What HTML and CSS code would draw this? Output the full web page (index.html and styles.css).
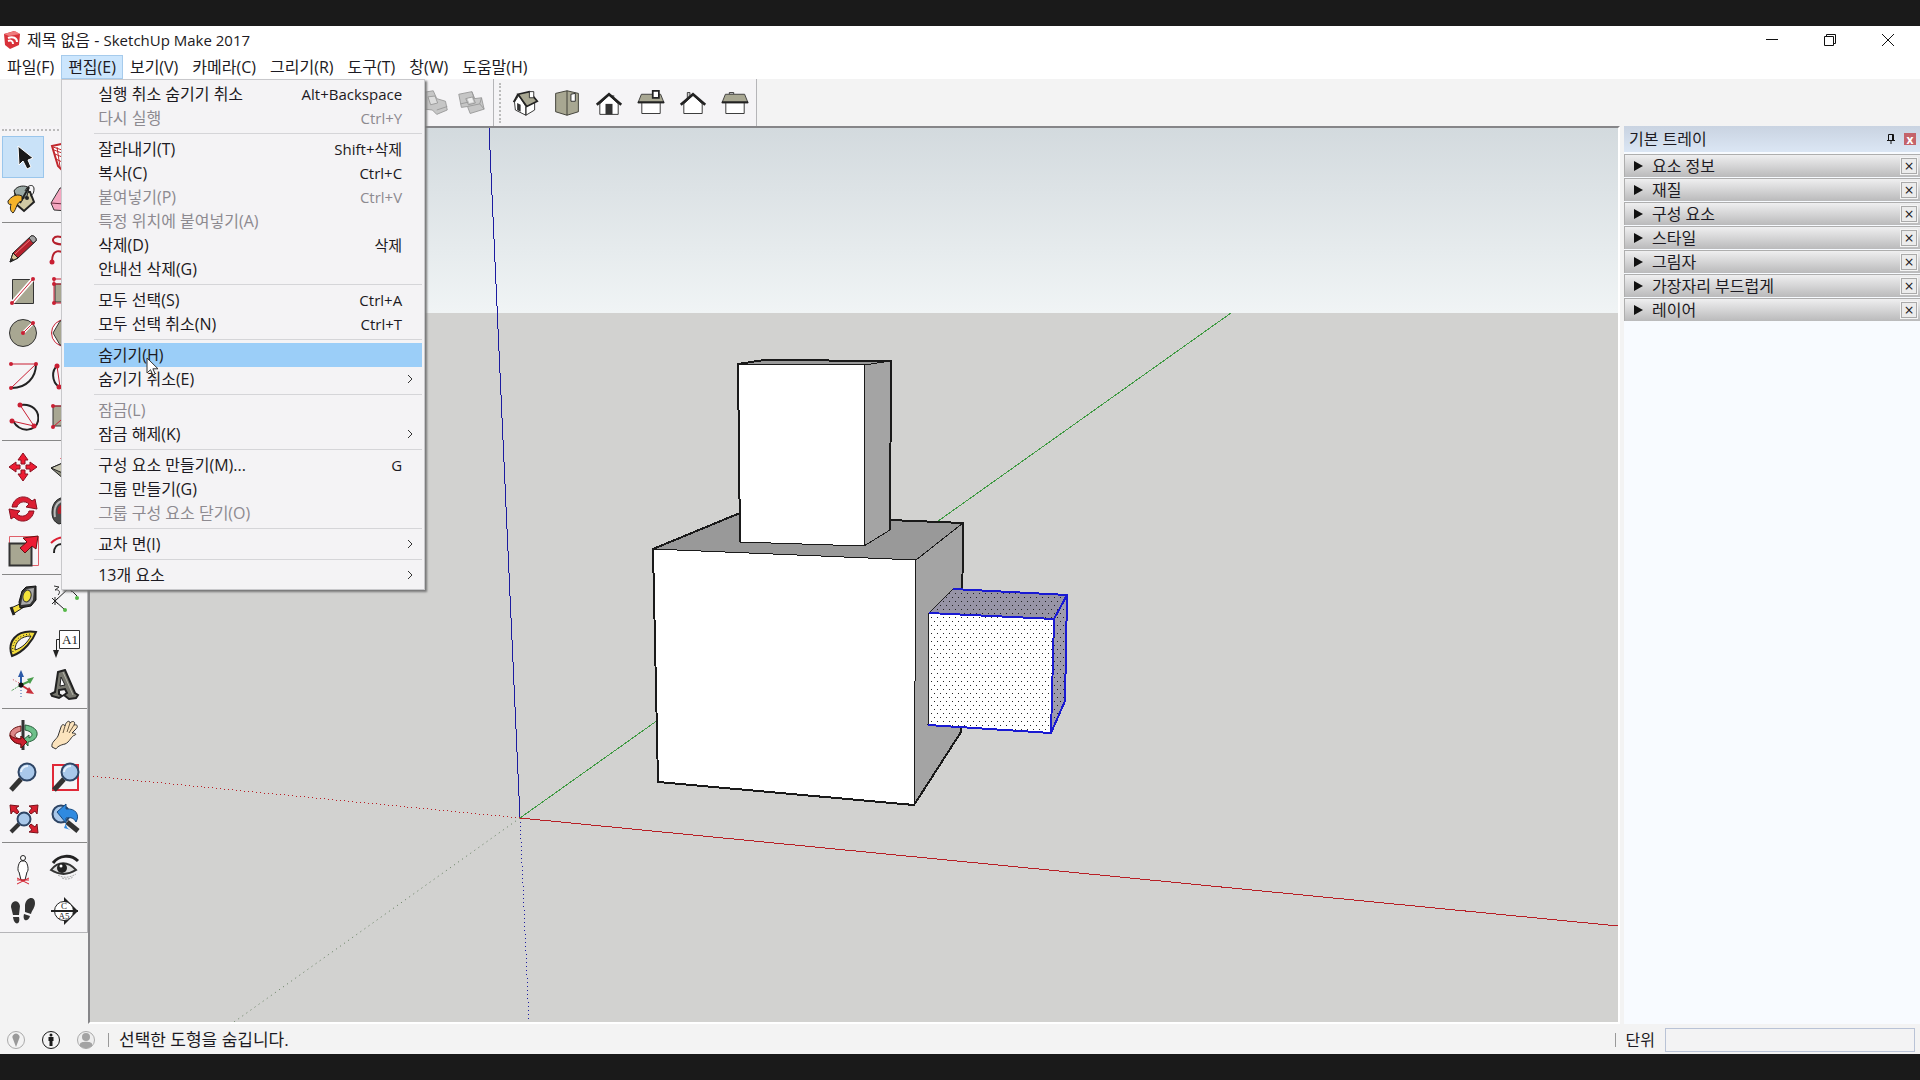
FILE: index.html
```html
<!DOCTYPE html>
<html lang="ko">

<head>
    <meta charset="UTF-8">
    <meta name="viewport" content="width=device-width, initial-scale=1.0">
    <title>제목 없음 - SketchUp Make 2017</title>
    <link rel="stylesheet" href="styles.css">
</head>

<body>
    <div class="window">
        <header class="titlebar">
            <svg class="logo" width="18" height="20" viewBox="0 0 18 20">
                <path d="M1 4L11 1l6 3-1 11-9 4-5-4z" fill="#d8323a" />
                <path d="M1 4l5 2 11-2-5-3z" fill="#ef7b7d" />
                <path d="M5 8c5-2 9 0 9 4M5 11c3-1 5 0 5 3" fill="none" stroke="#fff" stroke-width="2" />
            </svg>
            <h1 class="title">제목 없음 - <span class="latin">SketchUp Make 2017</span></h1>
            <div class="controls">
                <button aria-label="최소화"><svg width="12" height="12"><path d="M0 5.500h12" /></svg></button>
                <button aria-label="이전 크기로"><svg width="12" height="12"><path d="M.5 2.500h9v9h-9zM2.500 2.500v-2h9v9h-2" /></svg></button>
                <button aria-label="닫기"><svg width="12" height="12"><path d="M0 0l12 12M12 0L0 12" /></svg></button>
            </div>
        </header>

        <nav class="menubar">
            <div class="menu"><button class="menu-title">파일(F)</button></div>
            <div class="menu open">
                <button class="menu-title">편집(E)</button>
                <div class="dropdown">
                    <button class="item">실행 취소 숨기기 취소<kbd>Alt+Backspace</kbd></button>
                    <button class="item" disabled>다시 실행<kbd>Ctrl+Y</kbd></button>
                    <hr>
                    <button class="item">잘라내기(T)<kbd>Shift+삭제</kbd></button>
                    <button class="item">복사(C)<kbd>Ctrl+C</kbd></button>
                    <button class="item" disabled>붙여넣기(P)<kbd>Ctrl+V</kbd></button>
                    <button class="item" disabled>특정 위치에 붙여넣기(A)</button>
                    <button class="item">삭제(D)<kbd>삭제</kbd></button>
                    <button class="item">안내선 삭제(G)</button>
                    <hr>
                    <button class="item">모두 선택(S)<kbd>Ctrl+A</kbd></button>
                    <button class="item">모두 선택 취소(N)<kbd>Ctrl+T</kbd></button>
                    <hr>
                    <button class="item active">숨기기(H)
                        <svg class="pointer" width="14" height="20" viewBox="0 0 14 20"><path d="M1 1v15l3.500-3.300 2.300 5.300 2.400-1-2.300-5.200H12z" fill="#fff" stroke="#333" /></svg>
                    </button>
                    <button class="item">숨기기 취소(E)<svg class="more" width="6" height="10"><path d="M1 1l4 4-4 4" /></svg></button>
                    <hr>
                    <button class="item" disabled>잠금(L)</button>
                    <button class="item">잠금 해제(K)<svg class="more" width="6" height="10"><path d="M1 1l4 4-4 4" /></svg></button>
                    <hr>
                    <button class="item">구성 요소 만들기(M)...<kbd>G</kbd></button>
                    <button class="item">그룹 만들기(G)</button>
                    <button class="item" disabled>그룹 구성 요소 닫기(O)</button>
                    <hr>
                    <button class="item">교차 면(I)<svg class="more" width="6" height="10"><path d="M1 1l4 4-4 4" /></svg></button>
                    <hr>
                    <button class="item">13개 요소<svg class="more" width="6" height="10"><path d="M1 1l4 4-4 4" /></svg></button>
                </div>
            </div>
            <div class="menu"><button class="menu-title">보기(V)</button></div>
            <div class="menu"><button class="menu-title">카메라(C)</button></div>
            <div class="menu"><button class="menu-title">그리기(R)</button></div>
            <div class="menu"><button class="menu-title">도구(T)</button></div>
            <div class="menu"><button class="menu-title">창(W)</button></div>
            <div class="menu"><button class="menu-title">도움말(H)</button></div>
        </nav>

        <div class="toolbars">
            <!-- solid tools -->
            <div class="toolbar solids">
                <button aria-label="빼기"><svg viewBox="0 0 32 32"><path d="M2 4l12-2 4 9 10 3 2 10-12 5-5-5-9-1z" fill="#c6c6c6" stroke="#979797" /><path d="M8 9l8-1 3 8-8 2zM18 24l12-4" fill="#ddd" stroke="#979797" /></svg></button>
                <button aria-label="분할"><svg viewBox="0 0 32 32"><path d="M2 6l15-3 3 8 8-1 3 13-16 5-3-8-7 1z" fill="#c6c6c6" stroke="#979797" /><path d="M10 11l8-2 3 7-8 2zM12 20l14-3M20 11l-3-8M4 17l9-2M28 10l-2 7 5 6" fill="none" stroke="#979797" /><path d="M12 11l5-1 2 5-5 1z" fill="#eee" /></svg></button>
            </div>
            <!-- standard views -->
            <div class="toolbar views">
                <button aria-label="등각"><svg viewBox="0 0 32 32"><path d="M4 15l5-8 8 13v10L5 24zM17 20l10-5v9l-10 6z" fill="#fff" stroke="#222" /><path d="M8 6l13-3 9 11-12 6z" fill="#a8a792" stroke="#222" stroke-width="2" /><path d="M8 6L3 15" stroke="#222" stroke-width="2" /><path d="M7 16l4 2v8l-4-2z" fill="#333" /><path d="M21 3h5v7h-5z" fill="#fff" stroke="#222" /></svg></button>
                <button aria-label="상단"><svg viewBox="0 0 32 32"><path d="M3 5l13-3 13 3v21l-13 4-13-4z" fill="#a8a792" stroke="#33332c" /><path d="M16 2v28" stroke="#33332c" /><path d="M20.500 6l5-1v9h-5z" fill="#fff" stroke="#222" /></svg></button>
                <button aria-label="전면"><svg viewBox="0 0 32 32"><path d="M19 7h3v4h-3z" fill="#777" /><path d="M5.500 17v12h21V17L16 7z" fill="#fff" stroke="#222" /><path d="M2 18L16 6l14 12" fill="none" stroke="#222" stroke-width="3" /><path d="M12 17h8v12h-8z" fill="#333" /></svg></button>
                <button aria-label="오른쪽"><svg viewBox="0 0 32 32"><path d="M5.500 15h21v13h-21z" fill="#fff" stroke="#222" /><path d="M5 6h22l4 10H1z" fill="#a8a792" stroke="#333" /><path d="M1 15h30" stroke="#222" stroke-width="2" /><path d="M18 2h7v8h-7z" fill="#fff" stroke="#222" stroke-width="2" /></svg></button>
                <button aria-label="뒷면"><svg viewBox="0 0 32 32"><path d="M9.500 12V4h3v6" fill="#ccc" stroke="#333" /><path d="M5.500 17v11h21V17L16 7z" fill="#fff" stroke="#222" /><path d="M2 18L16 6l14 12" fill="none" stroke="#222" stroke-width="3" /></svg></button>
                <button aria-label="왼쪽"><svg viewBox="0 0 32 32"><path d="M5.500 15h21v13h-21z" fill="#fff" stroke="#222" /><path d="M9.500 6V4h5v2" fill="#ccc" stroke="#333" /><path d="M5 6h22l4 10H1z" fill="#a8a792" stroke="#333" /><path d="M1 15h30" stroke="#222" stroke-width="2" /></svg></button>
            </div>
        </div>

        <main class="workspace">
            <aside class="palette">
                <div class="group">
                    <button class="selected" aria-label="선택"><svg viewBox="0 0 32 32"><path d="M11 5l1 19 4-4 4 8 4-2-3-7 5-2z" fill="#1a1a1a" stroke="#fff" /></svg></button>
                    <button aria-label="구성 요소 만들기"><svg viewBox="0 0 32 32"><path d="M3 5l14-3 12 4-3 18-12 6-5-5z" fill="#fff" stroke="#c1272d" stroke-width="2" /><path d="M4 6l9 3v19M13 9l15-3M5 9l8 3M6 13l7 3M8 6l3 20M7 18l6 3" fill="none" stroke="#c1272d" /></svg></button>
                    <button aria-label="페인트통"><svg viewBox="0 0 32 32"><path d="M8 8l15 1 4 10-10 9-8-7z" fill="#cfc8a4" stroke="#222" stroke-width="2" /><path d="M7 8c3-6 12-6 15-3l-2 8-8 6z" fill="#9aa9a5" stroke="#222" /><path d="M13 20L22 4" stroke="#222" stroke-width="2" /><path d="M18 8c3-7 9-7 9-2s-2 6-4 7" fill="none" stroke="#222" /><circle cx="20" cy="15" r="2" fill="#222" /><path d="M15 13c-6-3-11 1-14 5 0 3 1 4 3 3-1 4-1 7 2 9 4-4 3-11 9-12z" fill="#f5b32a" stroke="#222" /></svg></button>
                    <button aria-label="지우개"><svg viewBox="0 0 32 32"><path d="M2 20L11 5l16-1 4 9-12 15-14-1z" fill="#f4a6c0" stroke="#333" /><path d="M2 20l13 1L27 4M15 21l4 7" fill="none" stroke="#6b2b3f" /></svg></button>
                </div>
                <div class="group">
                    <button aria-label="선"><svg viewBox="0 0 32 32"><path d="M3 29l3-9L24 3c3-1 6 2 5 5L11 25z" fill="#b5202c" stroke="#222" /><path d="M8 21L25 5" stroke="#ef7b7d" /><path d="M3 29l3-9 5 5z" fill="#d8c79a" stroke="#222" /><path d="M3 29l2-4 2 2z" fill="#222" /><path d="M24 3c3-1 6 2 5 5l-3 2-4-5z" fill="#a3a3a3" stroke="#333" /></svg></button>
                    <button aria-label="자유 곡선"><svg viewBox="0 0 32 32"><path d="M28 4H12C4 2 2 8 6 10s14 2 18 0M3 29c0-14 8-12 16-7" fill="none" stroke="#b5202c" stroke-width="2" /><circle cx="3" cy="29" r="2.500" fill="#c91f33" /></svg></button>
                    <button aria-label="직사각형"><svg viewBox="0 0 32 32"><path d="M5.500 4.500h21v24h-21z" fill="#a8a792" stroke="#333" /><path d="M5 28L26 4" stroke="#fff" stroke-width="4" /><path d="M5 28L26 4" stroke="#c91f33" /><circle cx="5" cy="28" r="2" fill="#c91f33" /><circle cx="26" cy="4" r="2" fill="#c91f33" /></svg></button>
                    <button aria-label="회전된 직사각형"><svg viewBox="0 0 32 32"><path d="M6 9h22v18H6z" fill="#a8a792" stroke="#333" /><path d="M5 4v24h24M5 9h20M5 4h24" fill="none" stroke="#c91f33" /><circle cx="5" cy="4" r="2" fill="#c91f33" /><circle cx="5" cy="9" r="2" fill="#c91f33" /><circle cx="5" cy="28" r="2" fill="#c91f33" /></svg></button>
                    <button aria-label="원"><svg viewBox="0 0 32 32"><circle cx="16" cy="16" r="13.500" fill="#a8a792" stroke="#333" /><path d="M16 16l9-9" stroke="#fff" stroke-width="3" /><path d="M16 16l9-9" stroke="#c91f33" /><circle cx="16" cy="16" r="2" fill="#c91f33" /><circle cx="26" cy="6" r="2" fill="#c91f33" /></svg></button>
                    <button aria-label="다각형"><svg viewBox="0 0 32 32"><circle cx="16" cy="16" r="13.500" fill="#fff" stroke="#c91f33" /><path d="M4 16L11 4h12l6 12-6 12H11z" fill="#a8a792" stroke="#333" /></svg></button>
                    <button aria-label="호"><svg viewBox="0 0 32 32"><path d="M29 5c0 14-10 24-24 24" fill="none" stroke="#222" stroke-width="2" /><path d="M4 5h25L4 29" fill="none" stroke="#c91f33" /><circle cx="4" cy="5" r="2" fill="#c91f33" /><circle cx="29" cy="5" r="2" fill="#c91f33" /><circle cx="4" cy="29" r="2" fill="#c91f33" /></svg></button>
                    <button aria-label="2점 호"><svg viewBox="0 0 32 32"><path d="M8 7c-5 4-6 15 2 21" fill="none" stroke="#222" stroke-width="2" /><path d="M8 7l3 21L26 6" fill="none" stroke="#c91f33" /><circle cx="8" cy="7" r="2.500" fill="#c91f33" /><circle cx="10" cy="28" r="2.500" fill="#c91f33" /></svg></button>
                    <button aria-label="3점 호"><svg viewBox="0 0 32 32"><path d="M13 4c12-2 20 6 18 16S14 33 6 20" fill="none" stroke="#222" stroke-width="2" /><path d="M13 4l14 21L5 20" fill="none" stroke="#c91f33" /><circle cx="13" cy="4" r="2.500" fill="#c91f33" /><circle cx="27" cy="25" r="2.500" fill="#c91f33" /><circle cx="5" cy="20" r="2.500" fill="#c91f33" /></svg></button>
                    <button aria-label="파이"><svg viewBox="0 0 32 32"><path d="M4 5h22v20H4z" fill="#a8a792" stroke="#333" /><path d="M4 5h24M4 26L28 5" fill="none" stroke="#c91f33" /><circle cx="4" cy="5" r="2" fill="#c91f33" /><circle cx="4" cy="26" r="2" fill="#c91f33" /></svg></button>
                </div>
                <div class="group">
                    <button aria-label="이동"><svg viewBox="0 0 32 32"><path d="M16 2l5 7h-3v4h-4V9h-3zM16 30l5-7h-3v-4h-4v4h-3zM2 16l7-5v3h4v4H9v3zM30 16l-7-5v3h-4v4h4v3z" fill="#ed1c33" stroke="#8a1020" /></svg></button>
                    <button aria-label="밀기/끌기"><svg viewBox="0 0 32 32"><path d="M2 17l14-6 14 5v5l-14 8z" fill="#8f8f7d" stroke="#222" /><path d="M2 17l14-6 14 5-14 7z" fill="#c6c4b0" stroke="#222" /><path d="M16 2l5 6h-3v8h-4V8h-3z" fill="#ed1c33" /></svg></button>
                    <button aria-label="회전"><svg viewBox="0 0 32 32"><path d="M5 14C7 3 19 1 25 8l3-2 2 10-11-2 3-3c-4-4-11-2-12 3zM27 18c-2 11-14 13-20 6l-3 2L2 16l11 2-3 3c4 4 11 2 12-3z" fill="#dc1f33" stroke="#8a1020" /></svg></button>
                    <button aria-label="따라가기"><svg viewBox="0 0 32 32"><path d="M3 19C3 8 11 2 22 5l7 5-6 17-13 4C5 29 3 25 3 19z" fill="#4d4d4d" stroke="#222" /><path d="M6 24C4 12 10 6 19 8" fill="none" stroke="#bbb" stroke-width="2" /><path d="M9 21c-2-6 2-11 11-10l5 8z" fill="#b5202c" /></svg></button>
                    <button aria-label="배율"><svg viewBox="0 0 32 32"><path d="M2.500 1.500h29v29h-29z" fill="none" stroke="#e0606a" /><path d="M2.500 8.500h22v22h-22z" fill="#a8a792" stroke="#333" stroke-width="2" /><path d="M31 1l-2 13-4-3-7 7-5-5 7-6-4-4z" fill="#ed1c33" stroke="#611" /></svg></button>
                    <button aria-label="오프셋"><svg viewBox="0 0 32 32"><path d="M2 8C10 0 24 0 30 14" fill="none" stroke="#dc1f33" stroke-width="2" /><path d="M5 18c0-12 14-12 18 0" fill="none" stroke="#222" stroke-width="2" /></svg></button>
                </div>
                <div class="group">
                    <button aria-label="줄자 도구"><svg viewBox="0 0 32 32"><path d="M4 23l11-5 2 4-11 7z" fill="#f2dc3c" stroke="#222" /><path d="M4 22l3 8" stroke="#222" stroke-width="3" /><path d="M15 6l4-4 10-1v14l-5 6-11 2-1-6z" fill="#333" stroke="#111" /><path d="M16 8l4-4 7-1-1 12-3 4-9 1z" fill="#aaa" /><ellipse cx="20" cy="11" rx="4" ry="6" fill="#f3e23a" stroke="#333" transform="rotate(15 20 11)" /></svg></button>
                    <button aria-label="치수"><svg viewBox="0 0 32 32"><path d="M6 16L20 3M6 16l9 8M20 3l8 8" fill="none" stroke="#222" /><path d="M3 13l6 6M3 19l6-6M6 12v8M17 1l6 6M17 6l6-6" stroke="#222" /><circle cx="16" cy="25" r="2" fill="#56b848" /><circle cx="28" cy="13" r="2" fill="#56b848" /><path d="M5 1l5 1-4 3c4-1 6 2 3 5" fill="none" stroke="#333" /></svg></button>
                    <button aria-label="각도기"><svg viewBox="0 0 32 32"><path d="M5 29C0 16 8 2 29 5 26 13 17 25 5 29z" fill="#f2dc3c" stroke="#222" stroke-width="2" /><path d="M8 23C8 15 14 9 24 9 20 16 15 21 8 23z" fill="#f6f5f7" stroke="#222" /><path d="M6 25C4 16 12 7 25 7" fill="none" stroke="#222" stroke-dasharray="1 2" /></svg></button>
                    <button aria-label="텍스트"><svg viewBox="0 0 32 32"><path d="M10.500 3.500h20v18h-20z" fill="#fff" stroke="#333" /><path d="M10 12.500H7.500V24" fill="none" stroke="#222" /><path d="M4 23h6l-3 8z" fill="#222" /><text x="21" y="17" text-anchor="middle" class="glyph">A1</text></svg></button>
                    <button aria-label="축"><svg viewBox="0 0 32 32"><path d="M14 16V6" stroke="#2c5aa8" stroke-width="2" /><path d="M14 1l3 7h-6z" fill="#2c5aa8" /><path d="M14 16l9-4" stroke="#4a9e4d" stroke-width="2" /><path d="M27 8l-4 7-3-5z" fill="#4a9e4d" /><path d="M14 16l8 5" stroke="#c9303c" stroke-width="2" /><path d="M27 25l-8-1 3-6z" fill="#c9303c" /><path d="M14 18v10" stroke="#2c5aa8" stroke-dasharray="1 2" /><path d="M12 17l-8 5" stroke="#4a9e4d" stroke-dasharray="2 1" /><path d="M12 14l-7-4" stroke="#c9303c" stroke-dasharray="1 2" /><circle cx="14" cy="16" r="2.500" fill="#111" /></svg></button>
                    <button aria-label="3D 텍스트"><svg viewBox="0 0 32 32"><path d="M9 3l7-2 10 23 3 2-2 3-7 1-5-4 3-2-2-4-6 1v4l3 2-3 2-7-2-1-2 4-2z" fill="#77776e" stroke="#222" stroke-width="2" /><path d="M12 8l4 8-5 1z" fill="#fff" stroke="#222" /><path d="M14 3l10 23" stroke="#b5b5aa" /></svg></button>
                </div>
                <div class="group">
                    <button aria-label="궤도"><svg viewBox="0 0 32 32"><path d="M18 6c8 1 13 5 12 10-1 4-4 6-9 7v4l-5-6 6-5v3c6-3 2-7-4-8z" fill="#6dc08a" stroke="#245c38" /><path d="M14 7C7 8 2 12 3 17s6 8 11 8v4l6-6-6-6v3c-8-1-8-6 0-8z" fill="#d88" stroke="#611" /><path d="M16 1v30" stroke="#333" stroke-width="3" /><path d="M3 16c1 6 6 9 11 9v4l6-6-6-6v3c-4 0-8-1-11-4z" fill="#c9202f" stroke="#611" /></svg></button>
                    <button aria-label="이동 보기"><svg viewBox="0 0 32 32"><path d="M3 28c-1-5 4-7 6-11L12 8c1-3 3-3 4-1 1-5 5-6 5-3 3-3 6-1 4 2 4-1 4 2 2 4l-4 4c3 0 5 1 3 2-4 1-5 7-10 9-5 1-8 3-9 5z" fill="#fbe3bd" stroke="#333" /><path d="M16 7l-2 7M21 4l-3 9M25 6l-5 8" stroke="#6b5b45" /></svg></button>
                    <button aria-label="확대/축소"><svg viewBox="0 0 32 32"><path d="M4 29l10-11" stroke="#333" stroke-width="5" /><circle cx="20" cy="11" r="8.500" fill="#a9c8ea" stroke="#2e4565" stroke-width="2" /><path d="M14 11c0-4 4-6 7-6" fill="none" stroke="#e5f0fb" stroke-width="2" /></svg></button>
                    <button aria-label="창 확대/축소"><svg viewBox="0 0 32 32"><path d="M4 4h25v25H4z" fill="none" stroke="#e02837" stroke-width="2" /><path d="M5 29l10-11" stroke="#333" stroke-width="5" /><circle cx="21" cy="11" r="8.500" fill="#a9c8ea" stroke="#2e4565" stroke-width="2" /><path d="M15 11c0-4 4-6 7-6" fill="none" stroke="#e5f0fb" stroke-width="2" /></svg></button>
                    <button aria-label="범위 확대/축소"><svg viewBox="0 0 32 32"><path d="M4 29l8-8" stroke="#333" stroke-width="4" /><circle cx="17" cy="16" r="6.500" fill="#a9c8ea" stroke="#2e4565" stroke-width="2" /><path d="M3 2l9 1-3 2 3 4-2 2-4-3-2 3zM31 2l-9 1 3 2-3 4 2 2 4-3 2 3zM31 30l-9-1 3-2-3-4 2-2 4 3 2-3z" fill="#d6202f" stroke="#7a101a" /></svg></button>
                    <button aria-label="이전"><svg viewBox="0 0 32 32"><path d="M18 19l11 9" stroke="#333" stroke-width="5" /><circle cx="12" cy="11" r="8.500" fill="#a9c8ea" stroke="#2e4565" stroke-width="2" /><path d="M8 9l9-8v5c10-1 14 6 10 13-2-4-5-5-10-4v5z" fill="#2f8ae0" stroke="#174b82" /><path d="M17 20c0 4 2 6 5 7l-7-2z" fill="#2f8ae0" /></svg></button>
                </div>
                <div class="group">
                    <button aria-label="카메라 배치"><svg viewBox="0 0 32 32"><circle cx="16" cy="5" r="2.500" fill="#fff" stroke="#222" /><path d="M14 8c-3 2-4 10-2 11l2 8h4l2-8c2-1 1-9-2-11z" fill="#fff" stroke="#222" /><path d="M10 31l12-6M10 25l12 6M10 27h12" stroke="#d6202f" /></svg></button>
                    <button aria-label="둘러보기"><svg viewBox="0 0 32 32"><path d="M4 10C10 2 22 1 29 8" fill="none" stroke="#222" stroke-width="3" /><path d="M2 17c7-9 17-9 25 0-8 5-17 5-25 0z" fill="#ddd" stroke="#333" stroke-width="2" /><circle cx="13" cy="15" r="5" fill="#222" /><circle cx="12" cy="13" r="1.500" fill="#fff" /><path d="M9 22c6 4 13 2 18-1M13 25c4 2 8 1 11-1" fill="none" stroke="#aaa" stroke-dasharray="2 1" /></svg></button>
                    <button aria-label="보행"><svg viewBox="0 0 32 32"><path d="M4 12c0-7 8-8 9-1l-1 9H6zM6 22h6c2 8-5 9-6 0zM18 10c1-8 10-10 10-2 0 5-3 7-4 11l-6-2zM17 19l6 2c-2 7-8 5-6-2z" fill="#333" /></svg></button>
                    <button aria-label="단면"><svg viewBox="0 0 32 32"><path d="M15 2l14 14-14 14V2z" fill="#222" /><circle cx="15" cy="16" r="9.500" fill="#fff" stroke="#222" /><path d="M2 16h27" stroke="#222" stroke-width="2" /><text x="15" y="14" text-anchor="middle" class="glyph tiny">C</text><text x="15" y="24" text-anchor="middle" class="glyph tiny">A5</text></svg></button>
                </div>
            </aside>

            <section class="viewport">
                <svg class="scene" viewBox="90 128 1528 894" preserveAspectRatio="xMinYMin slice">
                    <defs>
                        <linearGradient id="sky" x1="0" y1="0" x2="0" y2="1">
                            <stop offset="0" stop-color="#d3dade" />
                            <stop offset="1" stop-color="#f0f4f5" />
                        </linearGradient>
                        <pattern id="dots" width="6" height="8" patternUnits="userSpaceOnUse">
                            <path d="M1 1h1v1h-1zM4 5h1v1h-1z" fill="#222" />
                        </pattern>
                    </defs>
                    <rect x="90" y="128" width="1528" height="185" fill="url(#sky)" />
                    <rect x="90" y="313" width="1528" height="709" fill="#d2d2d0" />

                    <!-- axes -->
                    <g fill="none">
                        <path d="M520 818L489 128" stroke="#1c1ca0" />
                        <path d="M520 818l9 204" stroke="#1c1ca0" stroke-dasharray="1 3" />
                        <path d="M520 818l711-505" stroke="#3f9a42" />
                        <path class="smooth" d="M520 818L234 1022" stroke="#5f7a5a" stroke-dasharray="1 4" />
                        <path d="M520 818l1098 108" stroke="#b82026" />
                        <path d="M520 818L90 776" stroke="#b82026" stroke-dasharray="1 3" />
                    </g>

                    <!-- large box -->
                    <path d="M653 549l87-36 223 10-47 37z" fill="#999" />
                    <path d="M916 560l47-37-2 209-47 73z" fill="#a4a4a4" />
                    <path d="M653 549l263 11-2 245-256-23z" fill="#fff" />
                    <path d="M653 549l263 11 47-37M916 560l-2 245" fill="none" stroke="#1a1a1a" />
                    <path d="M740 513l-87 36 5 233 256 23 47-73 2-209-73-3" fill="none" stroke="#1a1a1a" stroke-width="2" />

                    <!-- tall box -->
                    <path d="M738 364l26-4 127 1-27 4z" fill="#999" />
                    <path d="M864 365l27-4-1 169-26 16z" fill="#a4a4a4" />
                    <path d="M738 364l126 1v181l-124-4z" fill="#fff" />
                    <path d="M738 364l126 1 27-4M864 365v181M740 542l124 4 26-16" fill="none" stroke="#1a1a1a" />
                    <path d="M740 542l-2-178 26-4 127 1-1 169" fill="none" stroke="#1a1a1a" stroke-width="2" />

                    <!-- selected box -->
                    <path d="M929 613l24-24 114 6-13 24z" fill="#9794a6" />
                    <path d="M1054 619l13-24-2 106-14 32z" fill="#9f9cae" />
                    <path d="M929 613l125 6-3 114-123-8z" fill="#fff" />
                    <path d="M929 613l24-24 114 6-2 106-14 32-123-8z" fill="url(#dots)" />
                    <path d="M953 589l-24 24-1 112" fill="none" stroke="#222" />
                    <path d="M953 589l114 6-2 106-14 32-123-8M929 613l125 6 13-24M1054 619l-3 114" fill="none" stroke="#1a1ad2" stroke-width="2" />
                </svg>
            </section>

            <aside class="tray">
                <header class="tray-title">
                    <h2>기본 트레이</h2>
                    <button class="pin" aria-label="자동 숨기기"><svg width="8" height="10"><path d="M1.500 6V.5h5V6M5.500 1v5M0 6.500h8M4 7v3" /></svg></button>
                    <button class="tray-close" aria-label="트레이 닫기">x</button>
                </header>
                <div class="panel"><button class="panel-name">요소 정보</button><button class="panel-close" aria-label="닫기">×</button></div>
                <div class="panel"><button class="panel-name">재질</button><button class="panel-close" aria-label="닫기">×</button></div>
                <div class="panel"><button class="panel-name">구성 요소</button><button class="panel-close" aria-label="닫기">×</button></div>
                <div class="panel"><button class="panel-name">스타일</button><button class="panel-close" aria-label="닫기">×</button></div>
                <div class="panel"><button class="panel-name">그림자</button><button class="panel-close" aria-label="닫기">×</button></div>
                <div class="panel"><button class="panel-name">가장자리 부드럽게</button><button class="panel-close" aria-label="닫기">×</button></div>
                <div class="panel"><button class="panel-name">레이어</button><button class="panel-close" aria-label="닫기">×</button></div>
            </aside>
        </main>

        <footer class="statusbar">
            <button aria-label="지리적 위치"><svg viewBox="0 0 20 20"><circle cx="10" cy="10" r="8.500" fill="none" stroke="#aaa" /><path d="M10 17L7 9a3.500 3.500 0 1 1 6 0z" fill="#999" /></svg></button>
            <button aria-label="크레딧"><svg viewBox="0 0 20 20"><circle cx="10" cy="10" r="8.500" fill="none" stroke="#1a1a1a" /><circle cx="10" cy="5" r="1.500" fill="#1a1a1a" /><path d="M7.500 7h5v4h-1v5h-3v-5h-1z" fill="#1a1a1a" /></svg></button>
            <button aria-label="로그인"><svg viewBox="0 0 20 20"><circle cx="10" cy="10" r="8.500" fill="#eee" stroke="#aaa" /><circle cx="10" cy="7" r="4" fill="#a3a3a3" /><path d="M4 16v-2c0-3 12-3 12 0v2c-4 3-8 3-12 0z" fill="#a3a3a3" /></svg></button>
            <p class="hint">선택한 도형을 숨깁니다.</p>
            <label for="measure">단위</label>
            <input id="measure" type="text">
        </footer>
    </div>
</body>

</html>
```

FILE: styles.css
```css
* {
    box-sizing: border-box;
}

body {
    margin: 0;
    padding: 26px 0;
    height: 100vh;
    background: #1a1a1a;
    color: #1c1a22;
    font-family: "Open Sans", "Noto Sans CJK KR", sans-serif;
    font-size: 16px;
    line-height: 24px;
}

button {
    margin: 0;
    padding: 0;
    border: 0;
    background: none;
    color: inherit;
    font: inherit;
}

svg {
    display: block;
}

h1,
h2,
p {
    margin: 0;
    font-size: 16px;
    font-weight: 400;
}

.window {
    height: 100%;
    display: flex;
    flex-direction: column;
    background: #f3f3f3;
}

/* title bar */
.titlebar {
    display: flex;
    align-items: center;
    height: 29px;
    padding: 0 3px 2px;
    background: #fff;
}

.title {
    flex: 1;
    margin-left: 6px;
}

.latin {
    font-size: 15px;
}

.controls {
    display: flex;
}

.controls button {
    width: 58px;
    display: flex;
    justify-content: center;
}

.controls path {
    fill: none;
    stroke: #111;
}

/* menus */
.menubar {
    display: flex;
    height: 24px;
    background: #fff;
}

.menu {
    position: relative;
}

.menu-title {
    height: 24px;
    padding: 0 7px;
    line-height: 22px;
}

.menu.open .menu-title {
    padding: 0 6px;
    border: 1px solid #a6cbec;
    background: #cce6fd;
}

.dropdown {
    position: absolute;
    top: 100%;
    left: 0;
    z-index: 5;
    width: 364px;
    padding: 2px;
    border: 1px solid #c8c8cb;
    background: #f4f3f5;
    box-shadow: 2px 2px 2px #777;
}

.dropdown hr {
    height: 1px;
    margin: 3px 0 3px 30px;
    border: 0;
    background: #d5d5d8;
}

.item {
    position: relative;
    display: flex;
    align-items: center;
    width: 100%;
    height: 24px;
    padding: 0 20px 0 34px;
    text-align: left;
    white-space: nowrap;
}

.item:disabled {
    color: #8d8a90;
}

.item.active {
    background: #9bcef8;
}

.item kbd {
    margin-left: auto;
    font-family: inherit;
    font-size: 15px;
}

.more {
    position: absolute;
    right: 9px;
}

.more path {
    fill: none;
    stroke: #333;
}

.pointer {
    position: absolute;
    left: 82px;
    top: 14px;
    z-index: 1;
}

/* toolbars */
.toolbars {
    display: flex;
    height: 47px;
}

.toolbar {
    display: flex;
    align-items: center;
    border-right: 1px solid #b5b5b8;
    background: #f5f4f6;
}

.toolbar button {
    width: 42px;
    padding: 0 7px;
}

.toolbar svg {
    width: 28px;
    height: 28px;
}

.solids {
    margin-left: 61px;
    padding: 0 4px 0 356px;
}

.solids button {
    width: 36px;
    padding: 0 4px;
}

.views {
    padding-left: 5px;
}

.views::before {
    content: "";
    height: 40px;
    border-left: 2px dotted #bbb;
    margin-right: 3px;
}

.workspace {
    flex: 1;
    min-height: 0;
    display: flex;
}

/* drawing tools */
.palette {
    align-self: flex-start;
    width: 88px;
    padding: 3px 0 0 2px;
    border-right: 1px solid #b5b5b8;
    border-bottom: 1px solid #b5b5b8;
    background: #f5f4f6;
}

.palette::before {
    content: "";
    display: block;
    height: 5px;
    border-top: 2px dotted #bbb;
}

.group {
    display: grid;
    grid-template-columns: 42px 42px;
}

.group + .group {
    padding-top: 5px;
    border-top: 1px solid #888;
    margin-top: 2px;
}

.group button {
    height: 42px;
    padding: 5px;
}

.group button.selected {
    padding: 4px;
    border: 1px solid #9ac6ec;
    background: #c9e2f8;
}

.group svg {
    width: 32px;
    height: 32px;
}

.glyph {
    font-family: "Liberation Serif", serif;
    font-size: 13px;
    fill: #222;
}

.tiny {
    font-size: 9px;
}

.viewport {
    flex: 1;
    min-width: 0;
    border: 2px solid #fff;
    border-top-color: #858588;
    border-left-color: #858588;
}

.scene {
    width: 100%;
    height: 100%;
    shape-rendering: crispEdges;
}

.smooth {
    shape-rendering: auto;
}

/* tray */
.tray {
    width: 296px;
    margin-left: 4px;
    background: #f8fbff;
}

.tray-title {
    display: flex;
    align-items: center;
    height: 26px;
    padding: 0 4px 0 5px;
    margin-bottom: 2px;
    background: linear-gradient(#c9d3e1, #dbe6f4);
}

.tray-title h2 {
    flex: 1;
}

.pin {
    margin-right: 9px;
}

.pin path {
    fill: none;
    stroke: #111;
}

.tray-close {
    width: 12px;
    height: 12px;
    background: #c4636a;
    color: #fff;
    font-size: 12px;
    font-weight: 700;
    line-height: 9px;
}

.panel {
    display: flex;
    align-items: center;
    height: 23px;
    padding: 0 3px 0 9px;
    margin-bottom: 1px;
    border-top: 1px solid #aeaeae;
    border-left: 1px solid #aeaeae;
    background: linear-gradient(#efeff0, #bababb);
}

.panel-name {
    flex: 1;
    display: flex;
    align-items: center;
    text-align: left;
    line-height: 22px;
}

.panel-name::before {
    content: "";
    margin-right: 9px;
    border-left: 9px solid #111;
    border-top: 5px solid transparent;
    border-bottom: 5px solid transparent;
}

.panel-close {
    width: 16px;
    height: 16px;
    border: 1px solid #aaa;
    outline: 1px solid #f5f5f5;
    background: #ececec;
    line-height: 14px;
}

/* status bar */
.statusbar {
    display: flex;
    align-items: center;
    height: 30px;
    padding: 2px 5px 0 6px;
}

.statusbar button {
    width: 20px;
    margin-right: 15px;
}

.hint {
    flex: 1;
    padding-left: 10px;
    border-left: 1px solid #999;
    border-right: 1px solid #999;
    margin-left: -3px;
    font-size: 17px;
    line-height: 14px;
}

.statusbar label {
    margin: 0 10px;
}

.statusbar input {
    width: 250px;
    height: 24px;
    border: 1px solid #b9c3d6;
    background: #f3f3f4;
    font: inherit;
}
```
